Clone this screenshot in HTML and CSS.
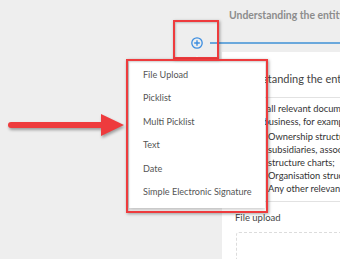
FILE: index.html
```html
<!DOCTYPE html>
<html>
<head>
<meta charset="utf-8">
<link rel="stylesheet" href="styles.css">
</head>
<body>
<div class="page">
  <div class="title">Understanding the entity's business</div>
  <div class="stepbar">
    <svg class="plus" width="12" height="12" viewBox="0 0 12 12">
      <circle cx="6" cy="6" r="5.2" fill="none" stroke="#3d8ee0" stroke-width="1.3"/>
      <path d="M6 3.2V8.8M3.2 6H8.8" stroke="#3d8ee0" stroke-width="1.4"/>
    </svg>
    <div class="line"></div>
  </div>
  <div class="card">
    <div class="card-head">Understanding the entity's business</div>
    <div class="card-body">
      <p>Upload all relevant documents about the entity<br>on the business, for example:</p>
      <ul>
        <li>Ownership structure, including<br>subsidiaries, associates and group<br>structure charts;</li>
        <li>Organisation structure;</li>
        <li>Any other relevant information.</li>
      </ul>
    </div>
    <div class="field">
      <div class="field-label">File upload</div>
      <div class="dropzone"></div>
    </div>
  </div>
</div>

<div class="menu">
  <div class="caret"></div>
  <div class="item">File Upload</div>
  <div class="item">Picklist</div>
  <div class="item">Multi Picklist</div>
  <div class="item">Text</div>
  <div class="item">Date</div>
  <div class="item">Simple Electronic Signature</div>
</div>

<div class="mark mark-plus"></div>
<div class="mark mark-menu"></div>
<svg class="arrow" width="124" height="30" viewBox="0 0 124 30">
  <line x1="5" y1="13" x2="100" y2="13" stroke="#ee3b3d" stroke-width="6" stroke-linecap="round"/>
  <polygon points="95,2 118,13 95,24" fill="#ee3b3d"/>
</svg>
</body>
</html>
```
FILE: styles.css
```css
html, body {
  margin: 0;
  padding: 0;
}
body {
  width: 340px;
  height: 259px;
  overflow: hidden;
  position: relative;
  background: #eeeeee;
  font-family: Lato, "Open Sans", sans-serif;
}
.page {
  display: flex;
  flex-direction: column;
  width: 560px;
}
.title {
  padding: 8px 0 0 229px;
  font-size: 10.4px;
  line-height: 14px;
  font-weight: 700;
  color: #8c8c8c;
  white-space: nowrap;
}
.stepbar {
  display: flex;
  align-items: center;
  gap: 7px;
  margin: 15px 0 0 191px;
  height: 12px;
}
.plus {
  display: block;
  flex: none;
}
.line {
  flex: 1;
  height: 1.5px;
  background: #6aa8dc;
}
.card {
  margin: 3px 0 0 222px;
  background: #ffffff;
  padding: 0 13px;
  height: 300px;
}
.card-head {
  padding: 20px 0 11px 0;
  margin-left: -2px;
  font-size: 11px;
  line-height: 14px;
  color: #444;
  border-bottom: 1px solid #e2e2e2;
  white-space: nowrap;
}
.card-body {
  padding: 4px 0 6px;
  font-size: 9.3px;
  line-height: 13px;
  color: #333;
  border-bottom: 1px solid #e2e2e2;
  white-space: nowrap;
}
.card-body p {
  margin: 0;
}
.card-body ul {
  margin: 2px 0 0;
  padding-left: 33px;
}
.field {
  padding-top: 9px;
}
.field-label {
  font-size: 9.5px;
  line-height: 14px;
  color: #444;
}
.dropzone {
  margin: 7px 0 0 1px;
  height: 80px;
  border: 1px dashed #dcdcdc;
  border-radius: 3px;
}
.menu {
  position: absolute;
  left: 129px;
  top: 61px;
  width: 136px;
  padding: 2px 0 5px;
  background: #ffffff;
  box-shadow: 0 1px 4px rgba(0, 0, 0, 0.25);
}
.caret {
  position: absolute;
  left: 63px;
  top: -5px;
  width: 0;
  height: 0;
  border-left: 5px solid transparent;
  border-right: 5px solid transparent;
  border-bottom: 5px solid #ffffff;
}
.item {
  padding: 5px 14px;
  font-size: 9.1px;
  line-height: 13.4px;
  color: #555;
  white-space: nowrap;
}
.mark {
  position: absolute;
  box-sizing: border-box;
  border: 2px solid #ee3b3d;
  box-shadow: 1px 1px 3px rgba(0, 0, 0, 0.35), inset 1px 1px 2px rgba(0, 0, 0, 0.2);
}
.mark-plus {
  left: 173px;
  top: 20px;
  width: 46px;
  height: 39px;
}
.mark-menu {
  left: 126px;
  top: 59px;
  width: 142px;
  height: 154px;
}
.arrow {
  position: absolute;
  left: 6px;
  top: 112px;
  filter: drop-shadow(1px 2px 1.5px rgba(0, 0, 0, 0.35));
}
```
